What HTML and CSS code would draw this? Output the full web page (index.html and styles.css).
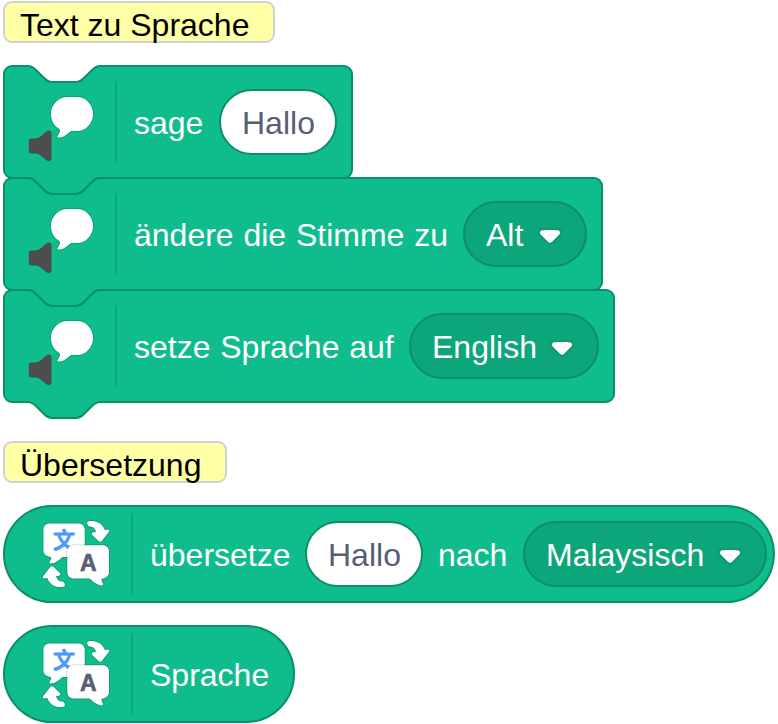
FILE: index.html
```html
<!DOCTYPE html>
<html lang="de">
<head>
<meta charset="utf-8">
<title>Text zu Sprache</title>
<link rel="stylesheet" href="styles.css">
</head>
<body>
<svg class="defs" aria-hidden="true">
  <defs>
    <symbol id="arrow" viewBox="0 0 12.71 8.79">
      <path fill="#231f20" opacity=".1" d="M12.71,2.44A2.41,2.41,0,0,1,12,4.16L8.08,8.08a2.45,2.45,0,0,1-3.45,0L0.72,4.16A2.42,2.42,0,0,1,0,2.44,2.48,2.48,0,0,1,.71.71C1,0.47,1.43,0,6.36,0S11.75,0.46,12,.71A2.44,2.44,0,0,1,12.71,2.44Z"/>
      <path fill="#fff" d="M6.36,7.79a1.43,1.43,0,0,1-1-.42L1.42,3.45a1.44,1.44,0,0,1,0-2c0.56-.56,9.31-0.56,9.87,0a1.44,1.44,0,0,1,0,2L7.37,7.37A1.43,1.43,0,0,1,6.36,7.79Z"/>
    </symbol>
    <symbol id="speech" viewBox="0 0 80 80">
      <path fill="#4d4d4d" stroke="#3f4f49" stroke-width="1" d="M11.500 57H15.500C20.500 57 24 50.500 28 49.200C29.800 48.600 31 49.400 31 51V76.500C31 78.300 29.700 79 28 78.400C24 77 20.500 71 15.500 71H11.500C10 71 9.300 70.200 9.300 69V59C9.300 57.700 10 57 11.500 57Z"/>
      <path class="white" d="M47.500 15H57C66 15 73 22.500 73 32C73 41.500 66 49 57 49H51C47.500 51.500 44 55.600 38.800 55.600C37.500 55.600 37 54.500 37.800 53.500C39.400 51.500 40.500 49.500 39.800 47.200C34.500 44.500 31 39 31 32C31 22.500 38.500 15 47.500 15Z"/>
    </symbol>
    <symbol id="translate" viewBox="0 0 80 80">
      <path class="white" d="M13.500 9.500H42.500C46 9.500 48.700 12.200 48.700 15.500V37C48.700 40.300 46 43 42.500 43H26.500C23.500 45.800 19 49.500 14.600 49.500C13.200 49.500 13 48.300 13.800 47.200C15.500 45.200 15.500 44.200 15 43C10.500 42.600 7.400 40.300 7.400 36.500V15.500C7.400 12.200 10 9.500 13.500 9.500Z"/>
      <text class="glyph-source" x="28" y="34" text-anchor="middle">文</text>
      <path class="white" d="M38 31.300H66.500C70.500 31.300 73 33.800 73 37.500V58C73 61.500 70.500 64.400 65.800 64.600C65.200 66 65.500 67.500 66.700 69C67.700 70.500 66.900 71.600 65.500 71.500C61 71.200 57 67.500 53.500 64.600H38C34 64.600 31.300 61.800 31.300 58V37.500C31.300 33.800 34 31.300 38 31.300Z"/>
      <path id="turn" class="white" d="M51.300 9.200C51 8 51.600 7.400 52.600 7.200C60.500 6 66.600 9.500 69 16.300L71.500 15.600C73 15.300 73.800 16.500 73 17.700L66 26.700C65 27.900 63.600 27.900 62.500 26.900L56.200 21C55.200 19.700 56 18.500 57.300 18.300L60 18C59.400 14.500 57.300 12.600 53 12.300C52 12.200 51.400 10.500 51.300 9.200Z"/>
      <use href="#turn" transform="rotate(180 40.050 40)"/>
      <text class="glyph-target" x="52.300" y="56.500" text-anchor="middle">A</text>
    </symbol>
  </defs>
</svg>

<div class="comment comment-speech">Text zu Sprache</div>

<div class="stack">
  <div class="block">
    <svg class="shape" width="348" height="112"><path transform="scale(2)" d="M0,4A4,4 0 0,1 4,0H12c2,0 3,1 4,2l4,4c1,1 2,2 4,2h12c2,0 3,-1 4,-2l4,-4c1,-1 2,-2 4,-2H170a4,4 0 0,1 4,4v48a4,4 0 0,1 -4,4H48c-2,0 -3,1 -4,2l-4,4c-1,1 -2,2 -4,2h-12c-2,0 -3,-1 -4,-2l-4,-4c-1,-1 -2,-2 -4,-2H4a4,4 0 0,1 -4,-4z"/></svg>
    <div class="row">
      <svg class="icon"><use href="#speech"/></svg><span class="separator"></span>
      <span class="label w-say">sage</span><span class="field input">Hallo</span>
    </div>
  </div>
  <div class="block">
    <svg class="shape" width="598" height="112"><path transform="scale(2)" d="M0,4A4,4 0 0,1 4,0H12c2,0 3,1 4,2l4,4c1,1 2,2 4,2h12c2,0 3,-1 4,-2l4,-4c1,-1 2,-2 4,-2H295a4,4 0 0,1 4,4v48a4,4 0 0,1 -4,4H48c-2,0 -3,1 -4,2l-4,4c-1,1 -2,2 -4,2h-12c-2,0 -3,-1 -4,-2l-4,-4c-1,-1 -2,-2 -4,-2H4a4,4 0 0,1 -4,-4z"/></svg>
    <div class="row">
      <svg class="icon"><use href="#speech"/></svg><span class="separator"></span>
      <span class="label w-voice">ändere die Stimme zu</span><span class="field menu m-voice">Alt<svg class="arrow"><use href="#arrow"/></svg></span>
    </div>
  </div>
  <div class="block">
    <svg class="shape" width="610" height="112"><path transform="scale(2)" d="M0,4A4,4 0 0,1 4,0H12c2,0 3,1 4,2l4,4c1,1 2,2 4,2h12c2,0 3,-1 4,-2l4,-4c1,-1 2,-2 4,-2H301a4,4 0 0,1 4,4v48a4,4 0 0,1 -4,4H48c-2,0 -3,1 -4,2l-4,4c-1,1 -2,2 -4,2h-12c-2,0 -3,-1 -4,-2l-4,-4c-1,-1 -2,-2 -4,-2H4a4,4 0 0,1 -4,-4z"/></svg>
    <div class="row">
      <svg class="icon"><use href="#speech"/></svg><span class="separator"></span>
      <span class="label w-lang">setze Sprache auf</span><span class="field menu m-lang">English<svg class="arrow"><use href="#arrow"/></svg></span>
    </div>
  </div>
</div>

<div class="comment comment-translate">Übersetzung</div>

<div class="reporter r-translate">
  <svg class="icon"><use href="#translate"/></svg><span class="separator"></span>
  <span class="label w-translate">übersetze</span><span class="field input">Hallo</span>
  <span class="label w-to">nach</span><span class="field menu m-target">Malaysisch<svg class="arrow"><use href="#arrow"/></svg></span>
</div>

<div class="reporter r-language">
  <svg class="icon"><use href="#translate"/></svg><span class="separator"></span>
  <span class="label">Sprache</span>
</div>
</body>
</html>
```
FILE: styles.css
```css
* { box-sizing: border-box; }

body {
  margin: 0;
  padding: 1px 3px;
  background: #fff;
  font: 32px/36px "Liberation Sans", Arial, sans-serif;
  white-space: nowrap;
  overflow: hidden;
}

.defs { display: block; width: 0; height: 0; }

.comment {
  height: 42px;
  padding: 4px 0 0 15px;
  border: 2px solid #d0d0d0;
  border-radius: 9px;
  background: #ffffa5;
  color: #000;
}
.comment-speech { width: 272px; }
.comment-translate { width: 224px; margin-top: 39px; }

.stack { margin: 23px 0 0 1px; }

.block { display: grid; height: 112px; }
.block > * { grid-area: 1 / 1; }

.shape {
  overflow: visible;
  fill: #0fbd8c;
  stroke: #0b8e69;
}

.row {
  z-index: 1;
  display: flex;
  align-items: center;
  padding-left: 16px;
}

.icon { flex: none; width: 80px; height: 80px; }

.white {
  fill: #fff;
  stroke: #000;
  stroke-opacity: .15;
  stroke-width: 2px;
  paint-order: stroke;
}

.separator {
  flex: none;
  width: 2px;
  height: 82px;
  margin: 0 17px 0 15px;
  border-radius: 1px;
  background: #0da57a;
}

.label { flex: none; padding-top: 2px; color: #fff; word-spacing: .9px; }
.w-say { width: 85px; }
.w-voice { width: 329px; }
.w-lang { width: 275px; }
.w-translate { width: 155px; }
.w-to { width: 100px; padding-left: 15px; }

.field {
  display: flex;
  flex: none;
  align-items: center;
  height: 66px;
  padding-top: 2px;
  border: 2px solid #0b8e69;
  border-radius: 33px;
}

.input {
  width: 118px;
  padding-left: 21px;
  background: #fff;
  color: #575e75;
}

.menu {
  justify-content: space-between;
  padding-right: 23px;
  padding-left: 21px;
  background: #0da57a;
  color: #fff;
}
.m-voice { width: 124px; }
.m-lang { width: 190px; }
.m-target { width: 244px; }

.arrow { width: 24px; height: 16.6px; margin-top: 2px; }

.reporter {
  display: flex;
  align-items: center;
  height: 98px;
  margin-top: 22px;
  padding-left: 31px;
  border: 2px solid #0b8e69;
  border-radius: 49px;
  background: #0fbd8c;
}
.r-translate { width: 772px; }
.r-language { width: 292px; }

.glyph-source {
  font: 500 22px "Noto Sans CJK SC", sans-serif;
  fill: #4c97ff;
  stroke: #4c97ff;
  stroke-width: .9px;
  stroke-linejoin: round;
}

.glyph-target {
  font: bold 23px "Liberation Sans", sans-serif;
  fill: #575e75;
  stroke: #575e75;
  stroke-width: .7px;
  stroke-linejoin: round;
}
```
